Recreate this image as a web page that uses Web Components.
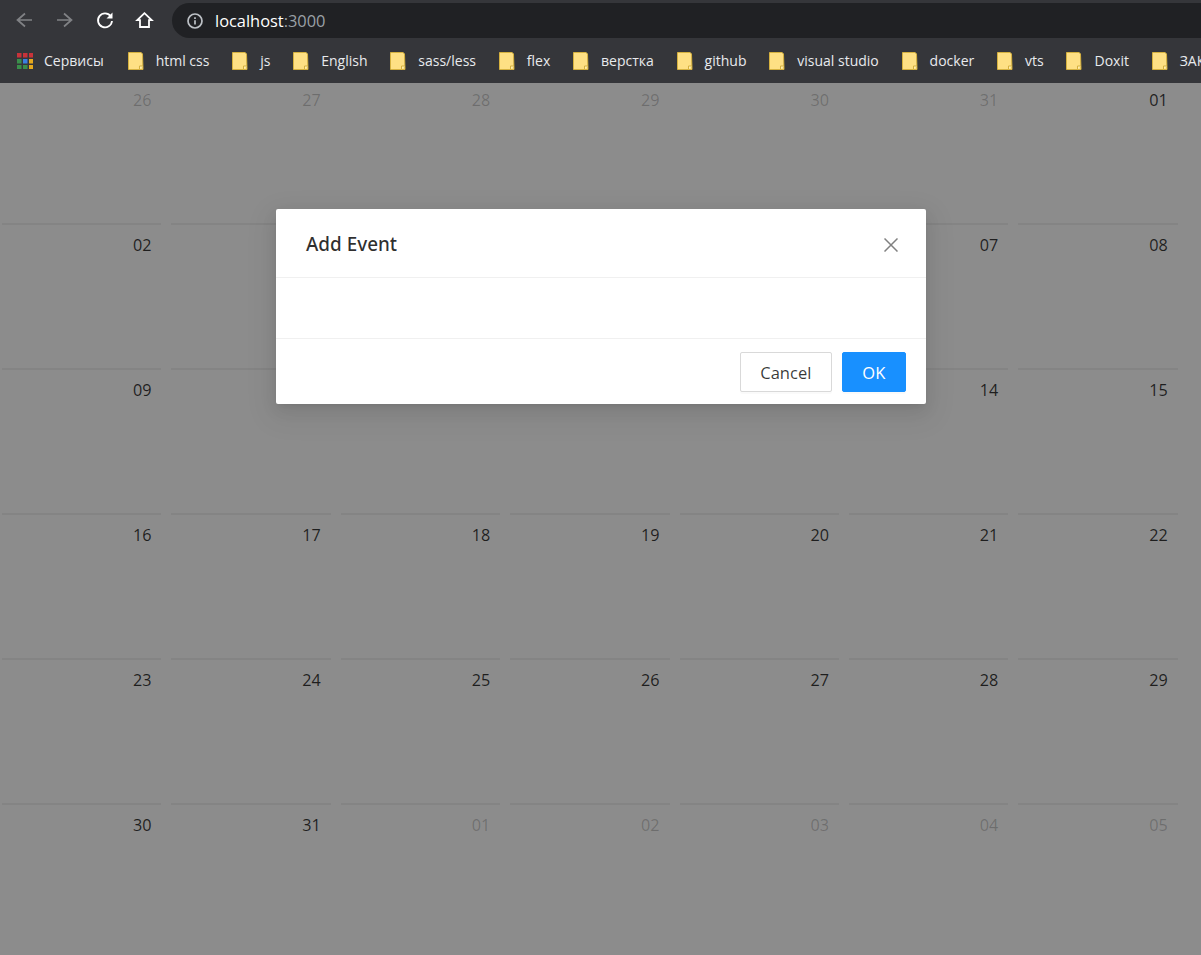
<!DOCTYPE html>
<html><head><meta charset="utf-8"><title>Calendar</title>
<style>
html,body{margin:0;padding:0;height:955px;overflow:hidden;background:#fff}
body{display:flex;flex-direction:column;position:relative;font-family:"Open Sans","Liberation Sans",sans-serif}
</style></head><body>
<browser-chrome url="localhost" port=":3000"></browser-chrome>
<cal-grid></cal-grid>
<modal-dialog heading="Add Event"><modal-button slot="footer">Cancel</modal-button><modal-button slot="footer" primary>OK</modal-button></modal-dialog>
<script>
const marks=["html css","js","English","sass/less","flex","верстка","github","visual studio","docker","vts","Doxit","ЗАК"];
class BookmarkItem extends HTMLElement{
  constructor(){super();this.attachShadow({mode:"open"}).innerHTML=`<style>
  :host{display:flex;align-items:center;gap:12px;flex:none;white-space:nowrap}
  svg{display:block;flex:none}
  </style><svg width="16" height="18" viewBox="0 0 16 18"><path d="M.5.5H13.200L14.500 2 15 17.500H.5z" fill="#fee084" stroke="#d5b13f"/><path d="M11.500 17.500v-3.500H15" fill="#ffeeb0" stroke="#d5b13f"/></svg><slot></slot>`}
}
customElements.define("bookmark-item",BookmarkItem);
class BrowserChrome extends HTMLElement{
  constructor(){super();const r=this.attachShadow({mode:"open"});
  const cells=[["#c8333a","#c8333a","#c8333a"],["#3a8f4b","#3b7fe0","#e6a81c"],["#3a8f4b","#3a8f4b","#e6a81c"]];
  let apps="";cells.forEach((row,y)=>row.forEach((c,x)=>apps+=`<rect x="${x*6}" y="${y*6}" width="4.500" height="4.500" fill="${c}"/>`));
  r.innerHTML=`<style>
  :host{display:block;flex:none;position:relative;z-index:2;background:#35363a;color:#fff;height:83px;overflow:hidden}
  .top{height:38px;display:flex;align-items:center;box-sizing:border-box;padding:3px 0 0 14px}
  .nav{display:flex;align-items:center;gap:20px;flex:none;margin-top:-2px}
  .nav svg{display:block;width:20px;height:20px;fill:none}
  .addr{margin-left:18px;flex:1;height:35px;background:#202124;border-radius:18px 0 0 18px;display:flex;align-items:center;padding-left:15px;font:16.400px "Open Sans","Liberation Sans",sans-serif}
  .addr svg{display:block;flex:none;margin-right:12px}
  .addr span{color:#9aa0a6}
  .marks{height:45px;display:flex;align-items:center;padding-left:17px;gap:22.800px;font-size:14px;color:#e8eaed;box-sizing:border-box}
  .apps{display:flex;align-items:center;gap:11px;flex:none;margin-right:1.200px}
  .apps svg{display:block}
  </style>
  <div class="top"><div class="nav">
    <svg viewBox="0 0 20 20"><path d="M18 10H4M11 3.500 3.500 10l7.500 6.500" stroke="#808285" stroke-width="1.700"/></svg>
    <svg viewBox="0 0 20 20"><path d="M3 10h14M10 3.500 17.500 10 10 16.500" stroke="#808285" stroke-width="1.700"/></svg>
    <svg viewBox="0 0 20 20"><path d="M16.700 6.300A7 7 0 1 0 18 11" stroke="#fff" stroke-width="1.800"/><path d="M18.500 2.500V8.500h-6z" fill="#fff"/></svg>
    <svg viewBox="0 0 20 20"><path d="M10.500 3.200 3.300 10.200H6V17h9v-6.800h2.700z" stroke="#fff" stroke-width="1.800"/></svg>
  </div><div class="addr"><svg width="16" height="16" viewBox="0 0 16 16"><circle cx="8" cy="8" r="7" fill="none" stroke="#bdc1c6" stroke-width="1.700"/><path d="M8 7.200v4.300M8 4.200v1.700" stroke="#bdc1c6" stroke-width="1.700"/></svg>${this.getAttribute("url")}<span>${this.getAttribute("port")}</span></div></div>
  <div class="marks"><div class="apps"><svg width="16" height="16" viewBox="0 0 16 16">${apps}</svg>Сервисы</div>
  ${marks.map(m=>`<bookmark-item>${m}</bookmark-item>`).join("")}</div>`}
}
customElements.define("browser-chrome",BrowserChrome);
class CalDay extends HTMLElement{
  constructor(){super();const o=this.hasAttribute("other");this.attachShadow({mode:"open"}).innerHTML=`<style>
  :host{display:block;border-top:2px solid #f0f0f0;box-sizing:border-box;text-align:right;padding:8px 10px 0 0;font-size:16.200px;line-height:24px;color:rgba(0,0,0,${o?.22:.78})}
  </style><slot></slot>`}
}
customElements.define("cal-day",CalDay);
class CalGrid extends HTMLElement{
  constructor(){super();const days=[];
  const push=(a,b,o)=>{for(let i=a;i<=b;i++)days.push([String(i).padStart(2,"0"),o])};
  push(26,31,true);push(1,31,false);push(1,5,true);
  this.attachShadow({mode:"open"}).innerHTML=`<style>
  :host{display:grid;grid-template-columns:repeat(7,159.400px);grid-auto-rows:145px;column-gap:10px;margin:-5px 0 0 2px}
  </style>${days.map(([d,o])=>`<cal-day${o?" other":""}>${d}</cal-day>`).join("")}`}
}
customElements.define("cal-grid",CalGrid);
class ModalButton extends HTMLElement{
  constructor(){super();const p=this.hasAttribute("primary");this.attachShadow({mode:"open"}).innerHTML=`<style>
  :host{display:flex;align-items:center;justify-content:center;box-sizing:border-box;height:40px;padding:1px ${p?19.75:19.25}px 0;border-radius:2px;font-size:16.500px;border:1px solid ${p?"#1890ff":"#d9d9d9"};background:${p?"#1890ff":"#fff"};color:${p?"#fff":"rgba(0,0,0,.78)"};box-shadow:0 2px 0 rgba(0,0,0,.02)}
  </style><slot></slot>`}
}
customElements.define("modal-button",ModalButton);
class ModalDialog extends HTMLElement{
  constructor(){super();this.attachShadow({mode:"open"}).innerHTML=`<style>
  :host{position:absolute;inset:83px 0 0 0;z-index:1;background:rgba(0,0,0,.45);display:block}
  .box{position:absolute;left:276px;top:126px;width:650px;background:#fff;border-radius:2px;box-shadow:0 3px 6px -4px rgba(0,0,0,.12),0 6px 16px 0 rgba(0,0,0,.08),0 9px 28px 8px rgba(0,0,0,.05)}
  .head{height:69px;box-sizing:border-box;border-bottom:1px solid #f0f0f0;display:flex;align-items:center;justify-content:space-between;padding:1px 28px 0 30px;color:rgba(0,0,0,.82);font-family:"Noto Sans","Open Sans",sans-serif;font-size:18.900px;font-weight:500}
  .head svg{display:block;margin-top:2px}
  .body{height:60px}
  .foot{height:66px;box-sizing:border-box;border-top:1px solid #f0f0f0;display:flex;justify-content:flex-end;gap:10px;padding:13px 20px 0 0}
  </style><div class="box"><div class="head">${this.getAttribute("heading")}<svg width="14" height="14" viewBox="0 0 14 14"><path d="M.5.5l13 13M13.500.5l-13 13" stroke="#808080" stroke-width="1.500" fill="none"/></svg></div><div class="body"></div><div class="foot"><slot name="footer"></slot></div></div>`}
}
customElements.define("modal-dialog",ModalDialog);
</script></body></html>
